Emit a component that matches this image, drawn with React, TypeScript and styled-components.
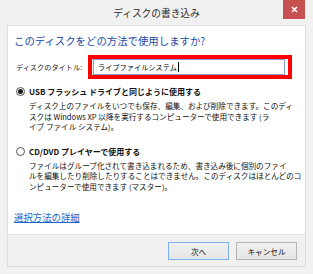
import React from "react";
import styled, { createGlobalStyle } from "styled-components";

const Global = createGlobalStyle`
  html, body { margin: 0; padding: 0; }
  body {
    width: 313px;
    height: 274px;
    overflow: hidden;
    font-family: "Noto Sans CJK JP", "Noto Sans", sans-serif;
    color: #1a1a1a;
  }
`;

const Window = styled.div`
  width: 313px;
  height: 274px;
  box-sizing: border-box;
  background: #f1f1f1;
  display: flex;
  flex-direction: column;
  padding: 0 7px 7px 7px;
`;

const TitleBar = styled.div`
  height: 25px;
  display: grid;
  grid-template-columns: 1fr auto 1fr;
  align-items: start;
`;

const Title = styled.div`
  grid-column: 2;
  font-size: 9.7px;
  line-height: 12px;
  margin-top: 7px;
  color: #2b2b2b;
`;

const CloseButton = styled.div`
  grid-column: 3;
  justify-self: end;
  width: 22px;
  height: 19px;
  margin-right: 1px;
  background: #c75050;
  display: flex;
  align-items: center;
  justify-content: center;
`;

const Panel = styled.div`
  flex: 1;
  background: #ffffff;
  border: 1px solid #dcdcdc;
  border-bottom: none;
  padding: 8px 0 0 6px;
  display: flex;
  flex-direction: column;
`;

const Heading = styled.div`
  font-size: 10.4px;
  line-height: 14px;
  color: #1d49a6;
`;

const TitleRow = styled.div`
  display: grid;
  grid-template-columns: 72px auto;
  align-items: center;
  margin-top: 7px;
  padding-left: 2px;
`;

const Label = styled.div`
  font-size: 7.2px;
  line-height: 10px;
  color: #222;
`;

const Highlight = styled.div`
  width: 204px;
  height: 24px;
  box-sizing: border-box;
  border: 4px solid #ff0000;
  padding: 0 3px 0 1px;
  background: #fff;
`;

const Input = styled.div`
  height: 16px;
  box-sizing: border-box;
  border: 1px solid #7f9fd4;
  display: flex;
  align-items: center;
  padding-left: 4px;
  font-size: 7.2px;
  color: #000;
`;

const Caret = styled.span`
  display: inline-block;
  width: 0;
  height: 10px;
  border-left: 1px solid #000;
  margin-left: 1px;
`;

const Option = styled.div<{ $gap: number }>`
  display: grid;
  grid-template-columns: 13px 1fr;
  margin-top: ${(p) => p.$gap}px;
  padding-left: 2px;
`;

const Radio = styled.span<{ $checked?: boolean }>`
  width: 9px;
  height: 9px;
  box-sizing: border-box;
  border: 1px solid #555;
  border-radius: 50%;
  background: #fff;
  display: flex;
  align-items: center;
  justify-content: center;
  align-self: center;
  &::after {
    content: "";
    width: 5px;
    height: 5px;
    border-radius: 50%;
    background: ${(p) => (p.$checked ? "#1a1a1a" : "transparent")};
  }
`;

const OptionLabel = styled.div`
  font-size: 8px;
  line-height: 11px;
  font-weight: 700;
  color: #111;
  white-space: nowrap;
`;

const Desc = styled.div`
  grid-column: 2;
  font-size: 7.6px;
  line-height: 10.5px;
  color: #111;
  margin-top: 4px;
  white-space: nowrap;
`;

const Link = styled.a`
  font-size: 9.4px;
  line-height: 12px;
  color: #1a66c8;
  text-decoration: underline;
  margin-top: 19px;
  align-self: flex-start;
`;

const Footer = styled.div`
  height: 33px;
  box-sizing: border-box;
  background: #f0f0f0;
  border: 1px solid #dcdcdc;
  border-top: 1px solid #e6e6e6;
  display: flex;
  justify-content: flex-end;
  align-items: flex-start;
  gap: 7px;
  padding: 7px 8px 0 0;
`;

const Button = styled.div<{ $default?: boolean }>`
  width: 61px;
  height: 18px;
  box-sizing: border-box;
  border: 1px solid ${(p) => (p.$default ? "#7cb2e8" : "#b4b4b4")};
  background: linear-gradient(#f0f0f0, #e5e5e5);
  display: flex;
  align-items: center;
  justify-content: center;
  font-size: 7.6px;
  color: #111;
`;

export default function App() {
  return (
    <>
      <Global />
      <Window>
        <TitleBar>
          <Title>ディスクの書き込み</Title>
          <CloseButton>
            <svg width="7" height="7" viewBox="0 0 7 7">
              <path d="M1 1L6 6M6 1L1 6" stroke="#fff" strokeWidth="1.6" />
            </svg>
          </CloseButton>
        </TitleBar>
        <Panel>
          <Heading>このディスクをどの方法で使用しますか?</Heading>
          <TitleRow>
            <Label>ディスクのタイトル:</Label>
            <Highlight>
              <Input>
                ライブファイルシステム
                <Caret />
              </Input>
            </Highlight>
          </TitleRow>
          <Option $gap={7}>
            <Radio $checked />
            <OptionLabel>USB フラッシュ ドライブと同じように使用する</OptionLabel>
            <Desc>
              ディスク上のファイルをいつでも保存、編集、および削除できます。このディ
              <br />
              スクは Windows XP 以降を実行するコンピューターで使用できます (ラ
              <br />
              イブ ファイル システム)。
            </Desc>
          </Option>
          <Option $gap={13}>
            <Radio />
            <OptionLabel>CD/DVD プレイヤーで使用する</OptionLabel>
            <Desc>
              ファイルはグループ化されて書き込まれるため、書き込み後に個別のファイ
              <br />
              ルを編集したり削除したりすることはできません。このディスクはほとんどのコ
              <br />
              ンピューターで使用できます (マスター)。
            </Desc>
          </Option>
          <Link href="#">選択方法の詳細</Link>
        </Panel>
        <Footer>
          <Button $default>次へ</Button>
          <Button>キャンセル</Button>
        </Footer>
      </Window>
    </>
  );
}
